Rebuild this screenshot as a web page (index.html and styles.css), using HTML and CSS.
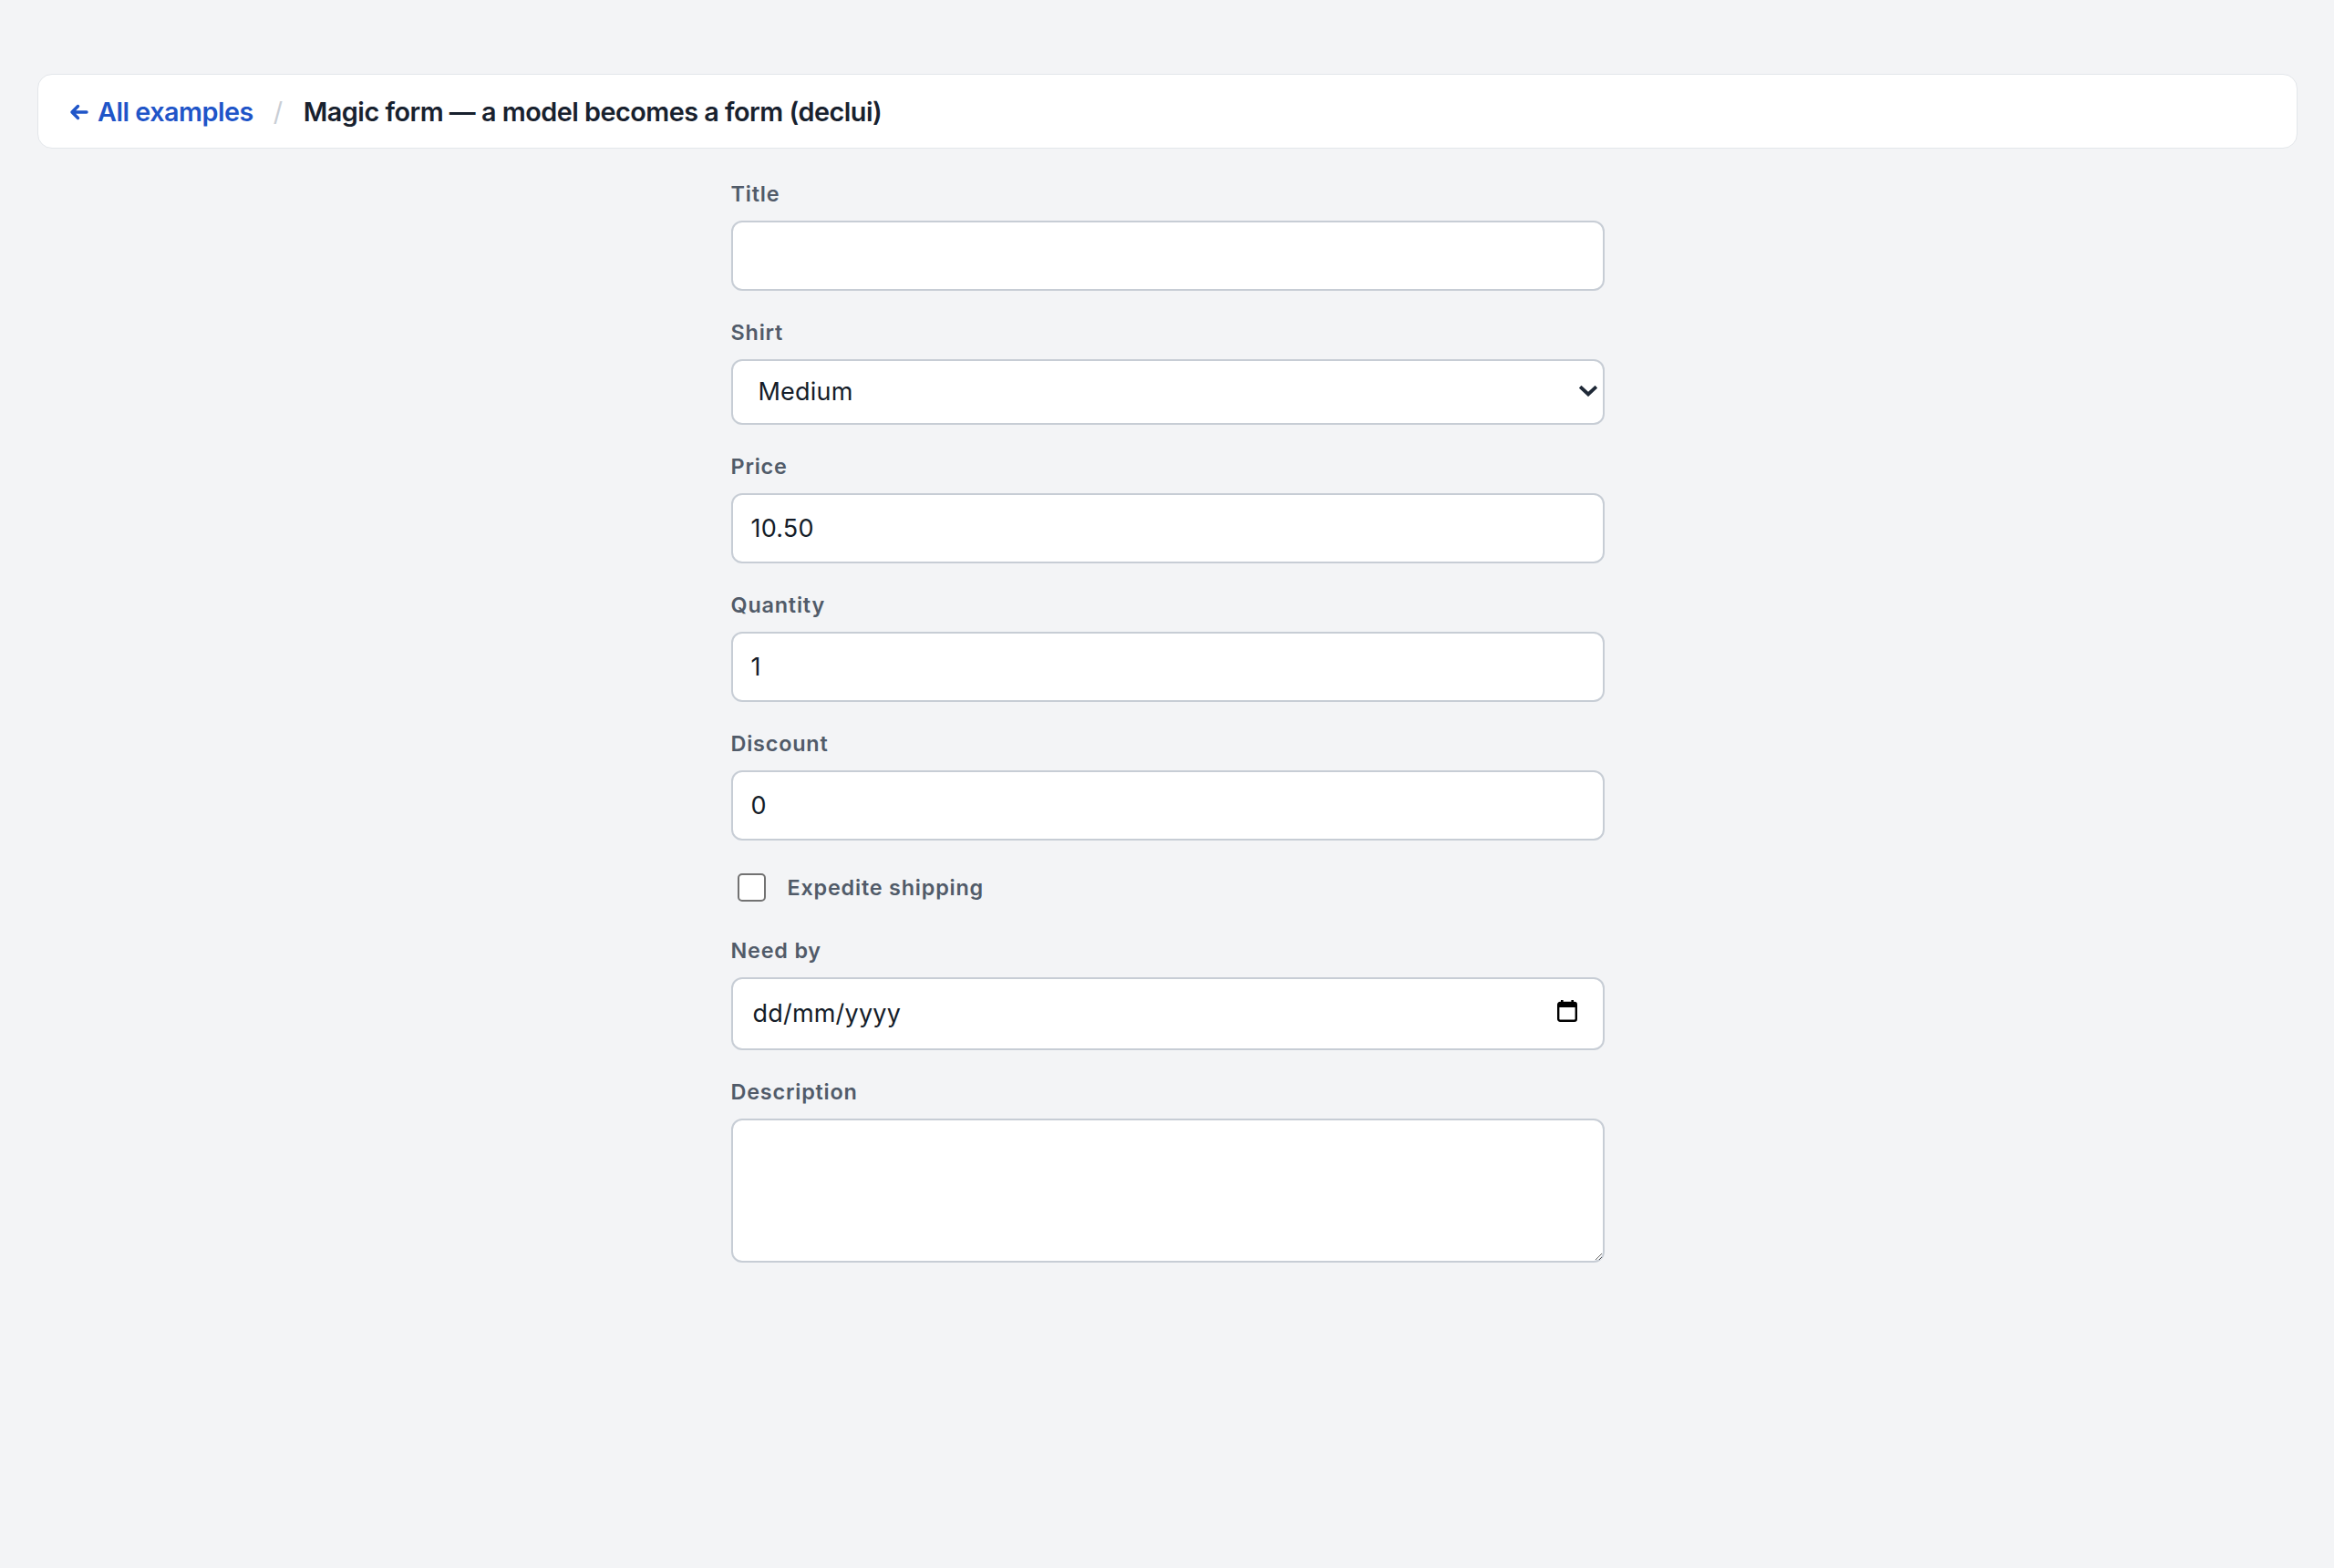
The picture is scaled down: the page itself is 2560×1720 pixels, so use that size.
FILE: index.html
```html
<!DOCTYPE html>
<html lang="en">
<head>
	<meta charset="UTF-8">
	<title>Magic form</title>
	<link rel="stylesheet" href="styles.css">
</head>
<body>
	<div class="page">
		<nav class="crumbs">
			<a class="back" href="javascript:void(0)">
				<svg class="back-arrow" width="21" height="18" viewBox="0 0 21 18"><path d="M19 9H3M9.5 2.5L3 9l6.5 6.5" fill="none" stroke="currentColor" stroke-width="3.4" stroke-linecap="round" stroke-linejoin="round"/></svg>
				<span>All examples</span>
			</a>
			<span class="sep">/</span>
			<span class="crumb-title">Magic form — a model becomes a form (declui)</span>
		</nav>

		<form class="form">
			<div class="field">
				<label class="label" for="title">Title</label>
				<input class="box" id="title" type="text">
			</div>

			<div class="field">
				<label class="label" for="shirt">Shirt</label>
				<div class="select-wrap">
					<select class="box select" id="shirt">
						<option>Small</option>
						<option selected>Medium</option>
						<option>Large</option>
					</select>
					<svg class="chevron" width="20" height="12" viewBox="0 0 20 12"><path d="M2.5 2.5L10 9.5l7.5-7" fill="none" stroke="#1f2937" stroke-width="3.8" stroke-linecap="square"/></svg>
				</div>
			</div>

			<div class="field">
				<label class="label" for="price">Price</label>
				<input class="box" id="price" type="text" value="10.50">
			</div>

			<div class="field">
				<label class="label" for="qty">Quantity</label>
				<input class="box" id="qty" type="text" value="1">
			</div>

			<div class="field">
				<label class="label" for="discount">Discount</label>
				<input class="box" id="discount" type="text" value="0">
			</div>

			<label class="check-row">
				<input class="check" type="checkbox">
				<span>Expedite shipping</span>
			</label>

			<div class="field">
				<label class="label" for="needby">Need by</label>
				<div class="box date">
					<input class="date-input" id="needby" type="text" placeholder="dd/mm/yyyy">
					<svg class="cal" width="22" height="24" viewBox="0 0 22 24"><rect x="4" y="0" width="2.6" height="4" fill="#000"/><rect x="15.4" y="0" width="2.6" height="4" fill="#000"/><rect x="1.2" y="3" width="19.6" height="19.8" rx="2" fill="none" stroke="#000" stroke-width="2.4"/><rect x="1.2" y="3" width="19.6" height="5" fill="#000"/></svg>
				</div>
			</div>

			<div class="field">
				<label class="label" for="desc">Description</label>
				<textarea class="box area" id="desc"></textarea>
			</div>
		</form>
	</div>
</body>
</html>
```

FILE: styles.css
```css
* { box-sizing: border-box; }
body { margin: 0; background: #f3f4f6; font-family: Inter, "Noto Sans", sans-serif; color: #111827; }

.page { padding: 81px 40px 80px 41px; }

.crumbs { display: flex; align-items: center; height: 82px; padding: 0 34px; background: #fff; border: 1.5px solid #e3e6ea; border-radius: 16px; font-size: 28.8px; font-weight: 600; letter-spacing: -0.5px; }
.back { display: flex; align-items: center; gap: 10px; color: #1f55c8; text-decoration: none; }
.back-arrow { display: block; margin-top: 1px; }
.sep { color: #c9ced5; font-weight: 400; margin: 0 23px 0 22px; }
.crumb-title { color: #18212e; }

.form { width: 958px; margin: 33px auto 0; display: flex; flex-direction: column; gap: 29.5px; }
.field { display: flex; flex-direction: column; }
.label { font-size: 23.4px; line-height: 33.6px; font-weight: 600; letter-spacing: 0.8px; color: #515b69; margin-bottom: 12px; }

.box { width: 100%; height: 77px; background: #fff; border: 2px solid #c7cdd5; border-radius: 12px; font-family: Inter, "Noto Sans", sans-serif; font-size: 27px; letter-spacing: 0.2px; color: #141c28; padding: 0 20px; outline: none; }

.select-wrap { position: relative; }
.select { height: 72px; padding-left: 28px; -webkit-appearance: none; appearance: none; }
.chevron { position: absolute; right: 8px; top: 29px; pointer-events: none; }

.check-row { display: flex; align-items: center; height: 45px; gap: 24px; font-size: 23.4px; font-weight: 600; letter-spacing: 0.8px; color: #515b69; }
.check { -webkit-appearance: none; appearance: none; width: 31px; height: 31px; margin: 0 0 0 7px; background: #fff; border: 2px solid #727272; border-radius: 5px; }

.date { display: flex; align-items: center; height: 80px; padding: 0 28px 0 22px; }
.date-input { flex: 1; border: 0; outline: none; background: transparent; font-family: inherit; font-size: 27px; letter-spacing: 0.2px; color: #141c28; padding: 0; }
.date-input::placeholder { color: #141c28; opacity: 1; }
.cal { display: block; margin-top: -6px; }

.area { height: 158px; padding: 14px 20px; resize: vertical; }
```
